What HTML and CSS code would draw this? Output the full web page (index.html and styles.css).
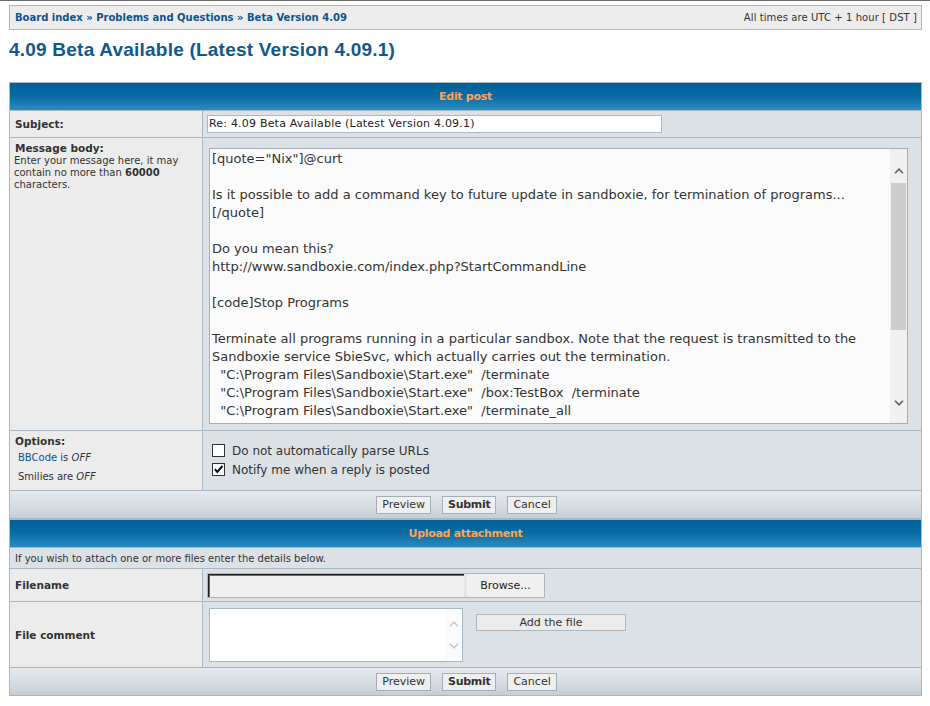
FILE: index.html
```html
<!DOCTYPE html>
<html lang="en">
<head>
<meta charset="utf-8">
<title>Edit post</title>
<link rel="stylesheet" href="styles.css">
</head>
<body>
<div class="topline"></div>
<div class="page">
  <div class="navbar">
    <p class="crumbs"><a href="#">Board index</a> » <a href="#">Problems and Questions</a> » <a href="#">Beta Version 4.09</a></p>
    <p class="tz">All times are UTC + 1 hour [ DST ]</p>
  </div>

  <h2 class="title"><a href="#">4.09 Beta Available (Latest Version 4.09.1)</a></h2>

  <div class="tablebg post-table">
    <div class="th">Edit post</div>

    <div class="cell-l mid"><b class="label">Subject:</b></div>
    <div class="cell-r subject-cell"><div class="subject">Re: 4.09 Beta Available (Latest Version 4.09.1)</div></div>

    <div class="cell-l top-label">
      <b class="label">Message body:</b>
      <span class="gensmall">Enter your message here, it may<br>contain no more than <b>60000</b><br>characters.</span>
    </div>
    <div class="cell-r msg-cell">
      <div class="editor">
        <div class="editor-text">[quote="Nix"]@curt

Is it possible to add a command key to future update in sandboxie, for termination of programs...
[/quote]

Do you mean this?
http://www.sandboxie.com/index.php?StartCommandLine

[code]Stop Programs

Terminate all programs running in a particular sandbox. Note that the request is transmitted to the
Sandboxie service SbieSvc, which actually carries out the termination.
  "C:\Program Files\Sandboxie\Start.exe"  /terminate
  "C:\Program Files\Sandboxie\Start.exe"  /box:TestBox  /terminate
  "C:\Program Files\Sandboxie\Start.exe"  /terminate_all</div>
        <div class="vscroll">
          <div class="sb-up"><svg width="10" height="6" viewBox="0 0 10 6"><path d="M1 5.2 L5 1.2 L9 5.2" fill="none" stroke="#5f5f5f" stroke-width="1.6"/></svg></div>
          <div class="thumb"></div>
          <div class="sb-rest"></div>
          <div class="sb-down"><svg width="10" height="6" viewBox="0 0 10 6"><path d="M1 0.8 L5 4.8 L9 0.8" fill="none" stroke="#5f5f5f" stroke-width="1.6"/></svg></div>
        </div>
      </div>
    </div>

    <div class="cell-l top-label">
      <b class="label">Options:</b>
      <span class="opt-info"><a href="#">BBCode</a> is <i>OFF</i></span>
      <span class="opt-info second">Smilies are <i>OFF</i></span>
    </div>
    <div class="cell-r opts-cell">
      <div class="opt"><span class="cb"></span><span>Do not automatically parse URLs</span></div>
      <div class="opt"><span class="cb"><svg width="11" height="11" viewBox="0 0 11 11"><path d="M1.8 5.2 L4.3 8 L9.4 2" fill="none" stroke="#111" stroke-width="2"/></svg></span><span>Notify me when a reply is posted</span></div>
    </div>

    <div class="cat">
      <span class="btn">Preview</span>
      <span class="btn btn-main">Submit</span>
      <span class="btn">Cancel</span>
    </div>
  </div>

  <div class="tablebg upload-table">
    <div class="th">Upload attachment</div>

    <div class="info">If you wish to attach one or more files enter the details below.</div>

    <div class="cell-l mid"><b class="label">Filename</b></div>
    <div class="cell-r file-cell">
      <div class="file">
        <div class="file-field"></div>
        <div class="file-browse">Browse...</div>
      </div>
    </div>

    <div class="cell-l mid"><b class="label">File comment</b></div>
    <div class="cell-r comment-cell">
      <div class="comment">
        <div class="comment-text"></div>
        <div class="comment-scroll">
          <svg width="10" height="6" viewBox="0 0 10 6"><path d="M1 5.2 L5 1.2 L9 5.2" fill="none" stroke="#c9c9c9" stroke-width="1.6"/></svg>
          <svg width="10" height="6" viewBox="0 0 10 6"><path d="M1 0.8 L5 4.8 L9 0.8" fill="none" stroke="#c9c9c9" stroke-width="1.6"/></svg>
        </div>
      </div>
      <span class="btn add-file">Add the file</span>
    </div>

    <div class="cat">
      <span class="btn">Preview</span>
      <span class="btn btn-main">Submit</span>
      <span class="btn">Cancel</span>
    </div>
  </div>
</div>
</body>
</html>
```

FILE: styles.css
```css
* { box-sizing: border-box; }

html, body {
  margin: 0;
  padding: 0;
  background: #ffffff;
}

body {
  font-family: "DejaVu Sans", Verdana, sans-serif;
  font-size: 10px;
  color: #333333;
}

a { color: #105289; text-decoration: none; }

.topline {
  height: 1px;
  background: #6b6b6b;
}

.page {
  padding: 4px 8px 0 9px;
}

/* breadcrumb bar */
.navbar {
  height: 25px;
  border: 1px solid #a9b8c2;
  background: #ececec;
  display: flex;
  justify-content: space-between;
  align-items: center;
  padding: 0 4px 0 5px;
}

.navbar p { margin: 0; }

.crumbs {
  font-weight: bold;
  font-size: 10px;
  color: #105289;
}

.tz {
  font-size: 10px;
  letter-spacing: 0.08px;
  color: #333333;
}

/* title */
.title {
  margin: 0;
  height: 52px;
  padding-top: 9px;
  font-family: "Liberation Sans", Arial, sans-serif;
  font-weight: bold;
  font-size: 19px;
  line-height: 22px;
  letter-spacing: 0.22px;
}

.title a { color: #10598c; }

/* forum tables */
.tablebg {
  background: #a9b8c2;
  padding: 1px;
  display: grid;
  grid-template-columns: 192px 1fr;
  gap: 1px;
}

.post-table { grid-template-rows: 27px 26px 292px 59px 27px; }
.upload-table { grid-template-rows: 27px 20px 32px 65px 27px; }

.th {
  grid-column: 1 / -1;
  background: linear-gradient(180deg, #02609a 0%, #076aa3 45%, #2a8bbd 100%);
  color: #ffa34f;
  font-weight: bold;
  font-size: 11px;
  letter-spacing: -0.3px;
  display: flex;
  align-items: center;
  justify-content: center;
}

.cell-l {
  background: #ececec;
  padding-left: 4px;
}

.cell-r {
  background: #dce1e5;
}

.mid {
  display: flex;
  align-items: center;
}

.label {
  font-size: 10.5px;
  margin-left: 1px;
  color: #333333;
}

.top-label {
  padding-top: 4px;
  display: flex;
  flex-direction: column;
  align-items: flex-start;
}

.top-label .label { line-height: 12px; }

.gensmall {
  font-size: 10px;
  line-height: 12px;
  margin-top: 1px;
}

/* subject */
.subject-cell {
  display: flex;
  align-items: center;
  padding-left: 4px;
}

.subject {
  width: 455px;
  height: 18px;
  border: 1px solid #a9b8c2;
  background: #ffffff;
  font-size: 11px;
  letter-spacing: 0.2px;
  line-height: 16px;
  padding-left: 1px;
  color: #222222;
  white-space: nowrap;
}

/* message editor */
.msg-cell {
  padding: 10px 0 0 6px;
}

.editor {
  width: 699px;
  height: 276px;
  border: 1px solid #a3aeb6;
  background: #fbfbfb;
  display: flex;
}

.editor-text {
  flex: 1;
  overflow: hidden;
  white-space: pre;
  font-size: 13px;
  line-height: 18px;
  padding: 1px 0 0 2px;
  color: #333333;
}

.vscroll {
  width: 17px;
  background: #f0f0f0;
  display: flex;
  flex-direction: column;
  align-items: center;
}

.vscroll svg { display: block; }

.sb-up { height: 34px; padding-top: 19px; }
.thumb { width: 15px; height: 147px; background: #cdcdcd; }
.sb-rest { flex: 1; }
.sb-down { height: 34px; padding-top: 11px; }

/* options */
.opt-info {
  font-size: 10px;
  line-height: 12px;
  margin: 5px 0 0 4px;
}

.opt-info.second { margin-top: 7px; }

.opts-cell {
  padding: 10px 0 0 9px;
}

.opt {
  height: 19px;
  display: flex;
  align-items: center;
  gap: 7px;
  font-size: 12px;
  color: #333333;
}

.cb {
  width: 13px;
  height: 13px;
  border: 1px solid #333333;
  background: #ffffff;
  display: flex;
  align-items: center;
  justify-content: center;
}

.cb svg { display: block; }

/* button rows */
.cat {
  grid-column: 1 / -1;
  background: linear-gradient(180deg, #e6eaee 0%, #d6dce2 55%, #c7cfd6 100%);
  display: flex;
  justify-content: center;
  align-items: center;
  gap: 11px;
  padding-left: 2px;
}

.btn {
  height: 18px;
  padding: 0 5px;
  border: 1px solid #a3aeb6;
  background: #efefef;
  font-size: 11px;
  line-height: 16px;
  color: #333333;
  display: inline-flex;
  align-items: center;
  justify-content: center;
}

.btn-main {
  font-weight: bold;
  letter-spacing: -0.3px;
}

/* upload table */
.info {
  grid-column: 1 / -1;
  background: #dce1e5;
  padding-left: 5px;
  font-size: 10px;
  display: flex;
  align-items: center;
}

.file-cell {
  padding: 4px 0 0 4px;
}

.file {
  width: 338px;
  height: 25px;
  border: 1px solid #a9b8c2;
  background: #f0f0f0;
  display: flex;
}

.file-field {
  width: 256px;
  border-top: 1px solid #1e1e1e;
  border-left: 1px solid #1e1e1e;
  box-shadow: inset 1px 1px 0 #6a6a6a;
  background: #f0f0f0;
}

.file-browse {
  flex: 1;
  border-left: 3px solid #e4e4e4;
  display: flex;
  align-items: center;
  justify-content: center;
  font-size: 11px;
  color: #222222;
}

.comment-cell {
  padding: 6px 0 0 6px;
  display: flex;
  align-items: flex-start;
  gap: 13px;
}

.comment {
  width: 254px;
  height: 54px;
  border: 1px solid #a9b8c2;
  background: #ffffff;
  display: flex;
}

.comment-text { flex: 1; }

.comment-scroll {
  width: 17px;
  background: #fbfbfb;
  display: flex;
  flex-direction: column;
  align-items: center;
  padding-top: 12px;
  gap: 16px;
}

.comment-scroll svg { display: block; }

.add-file {
  margin-top: 6px;
  width: 150px;
  height: 17px;
  background: #ececec;
  border-color: #a9b8c2;
}
```
